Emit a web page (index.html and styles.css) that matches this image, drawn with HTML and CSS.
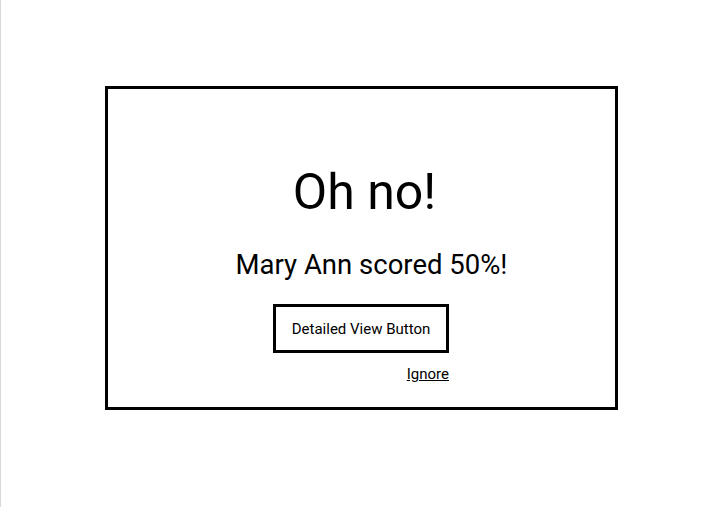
FILE: index.html
```html
<!DOCTYPE html>
<html>
<head>
<meta charset="utf-8">
<link rel="stylesheet" href="styles.css">
</head>
<body>
<div class="page">
  <div class="dialog">
    <h1 class="title">Oh no!</h1>
    <p class="score">Mary Ann scored 50%!</p>
    <div class="actions">
      <button class="detail-btn">Detailed View Button</button>
      <a class="ignore" href="#">Ignore</a>
    </div>
  </div>
</div>
</body>
</html>
```
FILE: styles.css
```css
html, body {
  margin: 0;
  padding: 0;
  background: #fff;
}
body {
  font-family: Roboto, "Liberation Sans", sans-serif;
  color: #000;
}
.page {
  min-height: 507px;
  box-sizing: border-box;
  border-left: 1px solid #d9d9d9;
  padding-top: 86px;
  padding-left: 104px;
}
.dialog {
  width: 513px;
  height: 324px;
  box-sizing: border-box;
  border: 3px solid #000;
  display: flex;
  flex-direction: column;
  align-items: center;
  padding-top: 74px;
}
.title {
  margin: 0;
  font-size: 50px;
  line-height: 58px;
  font-weight: 400;
  padding-left: 6px;
}
.score {
  margin: 28px 0 0;
  font-size: 27.5px;
  line-height: 32px;
  padding-left: 20px;
}
.actions {
  margin-top: 23px;
  display: flex;
  flex-direction: column;
  align-items: flex-end;
  margin-right: 1px;
}
.detail-btn {
  width: 176px;
  height: 49px;
  box-sizing: border-box;
  border: 3px solid #000;
  background: #fff;
  font-family: Roboto, "Liberation Sans", sans-serif;
  font-size: 15px;
  color: #000;
  padding: 0;
}
.ignore {
  margin-top: 12px;
  font-size: 15px;
  line-height: 18px;
  color: #000;
  text-decoration: underline;
}
```
